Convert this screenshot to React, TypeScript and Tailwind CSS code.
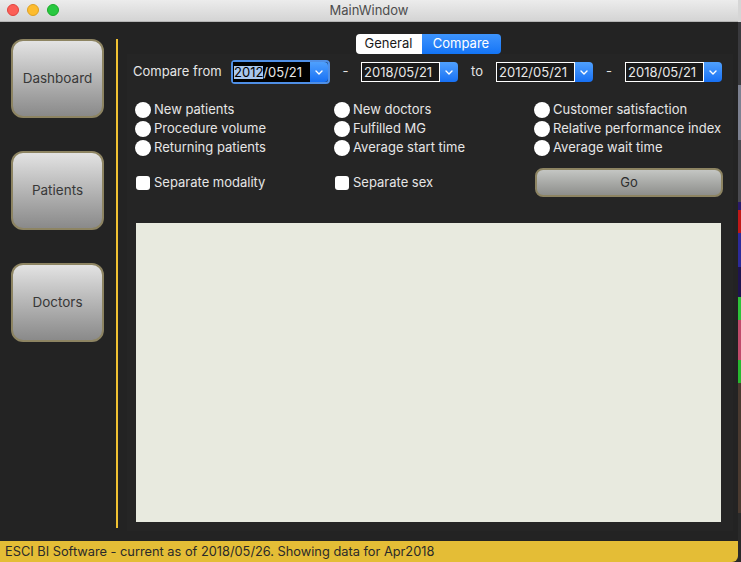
import React from "react"

const font = { fontFamily: "Inter, 'Liberation Sans', sans-serif" }

function TrafficLights() {
  return (
    <div className="absolute left-[7px] top-[4px] flex gap-[8px]">
      <span className="h-[12px] w-[12px] rounded-full bg-[#fc5f57] border border-[#e0443e]" />
      <span className="h-[12px] w-[12px] rounded-full bg-[#fdbc2e] border border-[#dea123]" />
      <span className="h-[12px] w-[12px] rounded-full bg-[#28c840] border border-[#1aab29]" />
    </div>
  )
}

function SideButton({ label }: { label: string }) {
  return (
    <button className="flex h-[79px] w-[93px] items-center justify-center rounded-[12px] border-2 border-[#8d8462] bg-gradient-to-b from-[#e3e3e3] to-[#8a8a8a] text-[13.5px] text-[#383838]">
      {label}
    </button>
  )
}

function Chevron() {
  return (
    <svg width="8" height="5" viewBox="0 0 8 5" fill="none">
      <path d="M1 1l3 3 3-3" stroke="white" strokeWidth="1.4" strokeLinecap="round" strokeLinejoin="round" />
    </svg>
  )
}

function DateEdit({ value, focused }: { value: string; focused?: boolean }) {
  return (
    <div
      className={
        focused
          ? "flex h-[24px] w-[99px] items-center rounded-[4px] border-2 border-[#4f8fe6] bg-[#1d3f6e]"
          : "flex h-[22px] w-[97px] items-center"
      }
    >
      <div
        className={
          focused
            ? "flex h-[20px] w-[79px] items-center bg-black pl-[1px] text-[13px] leading-none text-[#e8e8e8]"
            : "flex h-[20px] w-[79px] items-center border border-white bg-[#1a1a1a] pl-[2px] text-[13px] leading-none text-[#e8e8e8]"
        }
      >
        {focused ? (
          <>
            <span className="bg-[#a9c7ee] text-black">2012</span>
            <span>/05/21</span>
          </>
        ) : (
          value
        )}
      </div>
      <div className="flex h-[20px] w-[18px] items-center justify-center rounded-r-[4px] bg-gradient-to-b from-[#4fa0fd] to-[#1670f4]">
        <Chevron />
      </div>
    </div>
  )
}

function Radio({ label }: { label: string }) {
  return (
    <div className="flex h-[19px] items-center gap-[3px]">
      <span className="h-[16px] w-[16px] rounded-full bg-white shadow-[0_0_1px_rgba(0,0,0,0.6)]" />
      <span className="text-[13px] text-[#e6e6e6]">{label}</span>
    </div>
  )
}

function Check({ label }: { label: string }) {
  return (
    <div className="flex items-center gap-[4px] pl-[1px]">
      <span className="h-[14px] w-[14px] rounded-[3px] bg-white" />
      <span className="text-[13px] text-[#e6e6e6]">{label}</span>
    </div>
  )
}

const stripColors = [
  ["h-[22px]", "bg-[#d6d6d6]"],
  ["h-[63px]", "bg-[#3a3a3e]"],
  ["h-[55px]", "bg-[#7c8090]"],
  ["h-[62px]", "bg-[#4a4a50]"],
  ["h-[8px]", "bg-[#2a1a6a]"],
  ["h-[23px]", "bg-[#c01818]"],
  ["h-[34px]", "bg-[#2c2a9a]"],
  ["h-[30px]", "bg-[#1e1450]"],
  ["h-[23px]", "bg-[#2ec23a]"],
  ["h-[40px]", "bg-[#c04a6a]"],
  ["h-[23px]", "bg-[#28b830]"],
  ["h-[130px]", "bg-[#4a3a30]"],
  ["h-[49px]", "bg-[#2a2a2a]"],
]

export default function App() {
  return (
    <div className="flex h-[562px] w-[741px] overflow-hidden bg-[#2a2a2a]" style={font}>
      <div className="flex h-full w-[738px] flex-col overflow-hidden rounded-br-[6px]">
        {/* title bar */}
        <div className="relative flex h-[22px] items-center justify-center border-b border-[#b4b4b4] bg-gradient-to-b from-[#ececec] to-[#d4d4d4]">
          <TrafficLights />
          <span className="text-[13px] text-[#4d4d4d]">MainWindow</span>
        </div>

        {/* body */}
        <div className="flex flex-1 bg-[#232323]">
          {/* sidebar */}
          <div className="flex w-[116px] flex-col gap-[33px] pl-[11px] pt-[17px]">
            <SideButton label="Dashboard" />
            <SideButton label="Patients" />
            <SideButton label="Doctors" />
          </div>
          <div className="mb-[13px] mt-[17px] w-[2px] bg-[#f1c232]" />

          {/* main */}
          <div className="flex flex-1 flex-col">
            <div className="mt-[12px] flex h-[20px] justify-center text-[13px]">
              <div className="flex w-[66px] items-center justify-center rounded-l-[4px] bg-white text-[#1a1a1a]">
                General
              </div>
              <div className="flex w-[79px] items-center justify-center rounded-r-[4px] bg-gradient-to-b from-[#3d94fd] to-[#1274f6] text-white">
                Compare
              </div>
            </div>

            <div className="mb-[10px] mr-[5px] ml-[9px] flex flex-1 flex-col bg-[#252525]">
              {/* compare row */}
              <div className="mt-[6px] flex h-[24px] items-center pl-[6px] text-[13px] text-[#e6e6e6]">
                <span className="w-[98px]">Compare from</span>
                <DateEdit value="2012/05/21" focused />
                <span className="w-[31px] text-center">-</span>
                <DateEdit value="2018/05/21" />
                <span className="w-[38px] text-center">to</span>
                <DateEdit value="2012/05/21" />
                <span className="w-[32px] text-center">-</span>
                <DateEdit value="2018/05/21" />
              </div>

              {/* radios */}
              <div className="mt-[16px] grid grid-cols-[199px_200px_189px] pl-[8px]">
                <div className="flex flex-col">
                  <Radio label="New patients" />
                  <Radio label="Procedure volume" />
                  <Radio label="Returning patients" />
                </div>
                <div className="flex flex-col">
                  <Radio label="New doctors" />
                  <Radio label="Fulfilled MG" />
                  <Radio label="Average start time" />
                </div>
                <div className="flex flex-col">
                  <Radio label="Customer satisfaction" />
                  <Radio label="Relative performance index" />
                  <Radio label="Average wait time" />
                </div>

                <div className="mt-[11px] flex items-center">
                  <Check label="Separate modality" />
                </div>
                <div className="mt-[11px] flex items-center">
                  <Check label="Separate sex" />
                </div>
                <div className="mt-[11px] pl-[1px]">
                  <button className="flex h-[29px] w-[188px] items-center justify-center rounded-[8px] border-2 border-[#8d8462] bg-gradient-to-b from-[#c4c6c3] to-[#8e8f8c] text-[13px] text-[#2e2e2e]">
                    Go
                  </button>
                </div>
              </div>

              {/* chart area */}
              <div className="mb-[9px] ml-[9px] mr-[12px] mt-[26px] flex-1 bg-[#e8eadf]" />
            </div>
          </div>
        </div>

        {/* status bar */}
        <div className="flex h-[21px] items-center bg-[#e4bd36] pl-[5px] text-[12.8px] text-[#2a2a2a]">
          ESCI BI Software - current as of 2018/05/26. Showing data for Apr2018
        </div>
      </div>

      {/* desktop sliver */}
      <div className="flex w-[3px] flex-col">
        {stripColors.map(([h, c], i) => (
          <div key={i} className={`${h} ${c}`} />
        ))}
      </div>
    </div>
  )
}
